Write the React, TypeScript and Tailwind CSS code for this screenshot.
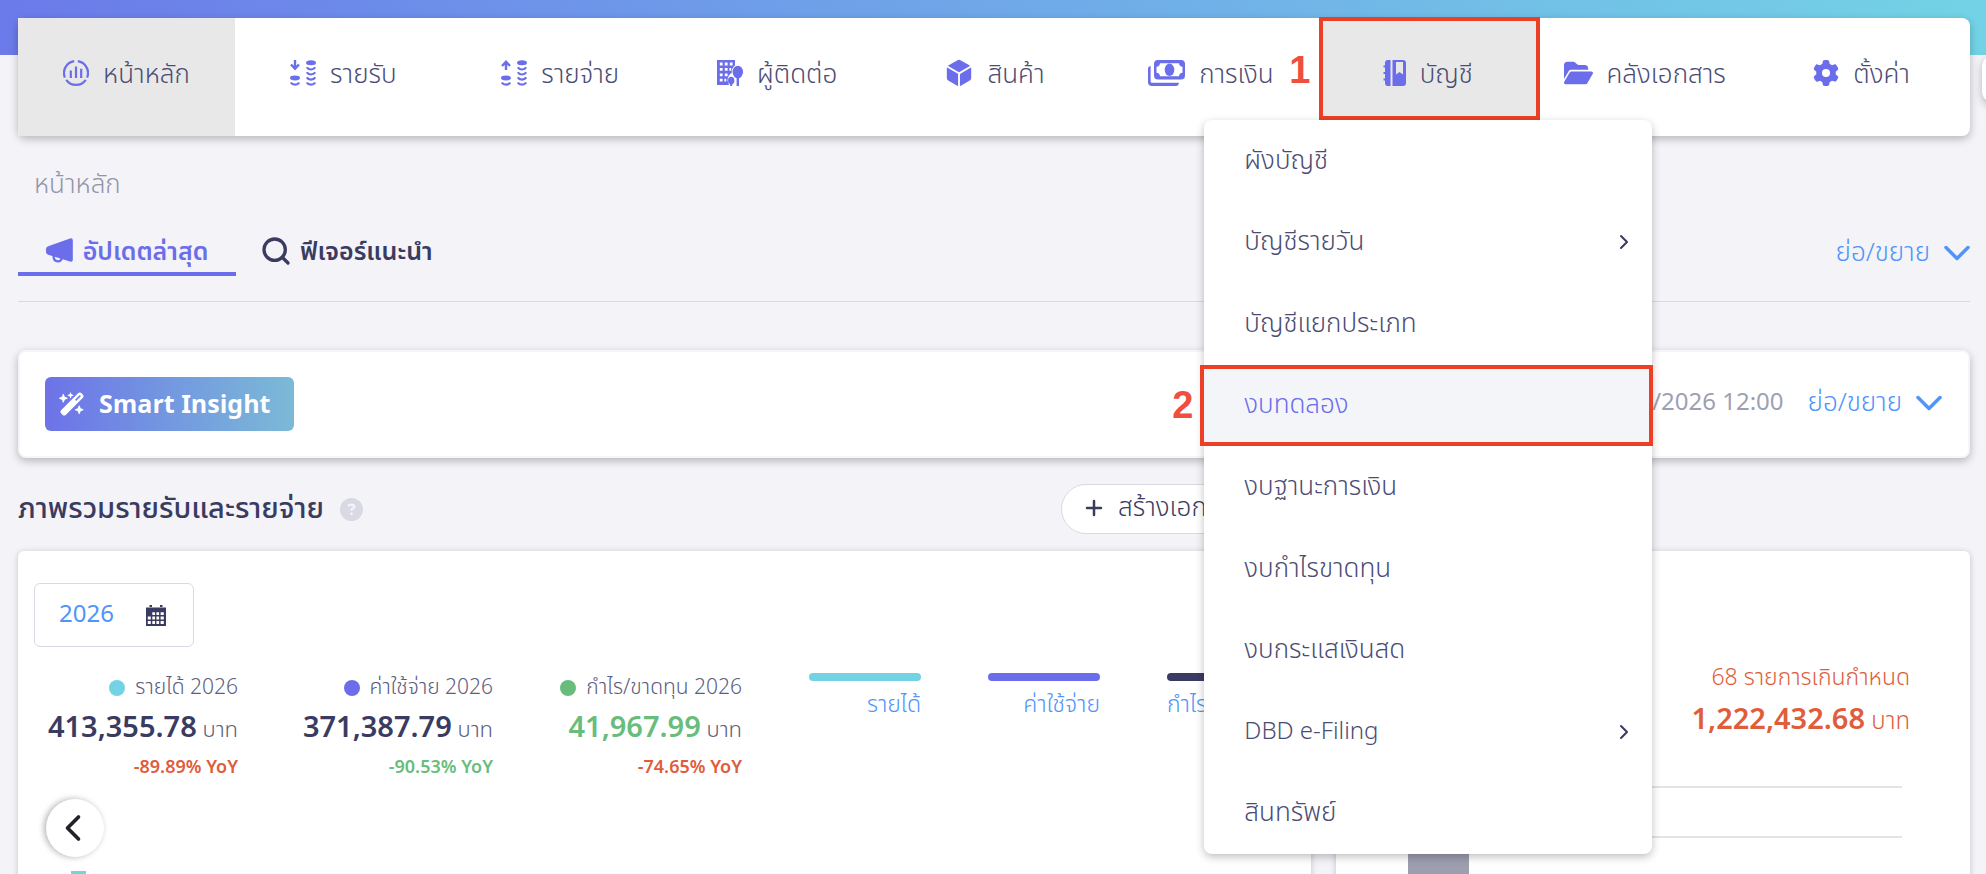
import type { ReactNode } from 'react'
import { ChevronLeft, ChevronRight, Plus, Search } from 'lucide-react'
import { FaCircleQuestion, FaFolderOpen, FaGear, FaWandMagicSparkles } from 'react-icons/fa6'
import { IoCube } from 'react-icons/io5'
import clsx from 'clsx'

const DashboardIcon = () => (
    <svg viewBox="0 0 26 26" className="h-[26px] w-[26px]" fill="none" stroke="currentColor" strokeWidth="2.2">
        <path d="M11.2 1.2A12 12 0 0 0 1.9 17.6" />
        <path d="M14.8 1.2A12 12 0 0 1 24.1 17.6" />
        <path d="M3.2 19.8A12 12 0 0 0 22.8 19.8" />
        <path d="M7.8 10.5V18M13 6.5V18M18.2 8.8V18" />
    </svg>
)

const CoinsIcon = ({ up }: { up?: boolean }) => (
    <svg viewBox="0 0 26 26" className="h-[26px] w-[26px]" fill="none" stroke="currentColor" strokeWidth="2.2">
        {up ? <path d="M5 10V2M1 6L5 1.8L9 6" strokeWidth="2.4" /> : <path d="M5 0V8.5M1 4.5L5 8.7L9 4.5" strokeWidth="2.4" />}
        <ellipse cx="5" cy="18" rx="5" ry="2.4" fill="currentColor" stroke="none" />
        <path d="M0.8 22.5C2.5 25.4 7.5 25.4 9.2 22.5" />
        <ellipse cx="21" cy="2.8" rx="5" ry="2.5" fill="currentColor" stroke="none" />
        <path d="M16.8 7.3C18.5 10.2 23.5 10.2 25.2 7.3" />
        <path d="M16.8 12.3C18.5 15.2 23.5 15.2 25.2 12.3" />
        <path d="M16.8 17.4C18.5 20.3 23.5 20.3 25.2 17.4" />
        <path d="M16.8 22.5C18.5 25.4 23.5 25.4 25.2 22.5" />
    </svg>
)

const ContactIcon = () => (
    <svg viewBox="0 0 26 26" className="h-[26px] w-[26px]" fill="currentColor">
        <path d="M0 0H18V5.5C15.5 7 14.3 10 14.8 13C12.5 14 10.5 17 10.5 20.5L12 25H0Z" />
        <path
            fill="#fff"
            d="M2.8 2.6h2.8v2.8H2.8zM7.8 2.6h2.8v2.8H7.8zM12.8 2.6h2.8v2.8h-2.8zM2.8 8h2.8v2.8H2.8zM7.8 8h2.8v2.8H7.8zM12.4 8h1.8v2.8h-1.8zM2.8 13.4h2.8v2.8H2.8zM7.8 13.4h2.8v2.8H7.8zM2.8 18.8h2.8v2.8H2.8zM7.4 18.8h1.8v2.8H7.4z"
        />
        <ellipse cx="20.8" cy="12" rx="5.2" ry="6.3" />
        <path d="M19.6 17h2.4v9h-2.4z" />
        <ellipse cx="14.2" cy="20.6" rx="3.2" ry="3.8" />
        <path d="M13.2 23h2v3h-2z" />
    </svg>
)

const CashIcon = () => (
    <svg viewBox="0 0 37 26" className="h-[26px] w-[37px]" fill="currentColor">
        <path fillRule="evenodd" d="M10 0H33Q37 0 37 4V15.5Q37 19.5 33 19.5H10Q6 19.5 6 15.5V4Q6 0 10 0ZM12 3.2A4 4 0 0 1 8.5 6.7V12.8A4 4 0 0 1 12 16.3H31A4 4 0 0 1 34.5 12.8V6.7A4 4 0 0 1 31 3.2Z" />
        <ellipse cx="21.5" cy="9.8" rx="4.8" ry="6.2" />
        <path d="M0 8.5Q0 6.2 2.6 6V21.5Q2.6 22.8 4 22.8H31Q30.4 26 28 26H4Q0 26 0 22Z" />
    </svg>
)

const LedgerIcon = () => (
    <svg viewBox="0 0 23 26" className="h-[26px] w-[23px]" fill="currentColor">
        <path d="M5 0H7.5V26H5Q2 26 2 23V20.5H0.5V18.5H2V14H0.5V12H2V7.5H0.5V5.5H2V3Q2 0 5 0Z" />
        <path fillRule="evenodd" d="M9.5 0H20Q23 0 23 3V23Q23 26 20 26H9.5ZM13 2V14.5L16.5 12L20 14.5V2Z" />
    </svg>
)

const MegaphoneIcon = () => (
    <svg viewBox="0 0 27 25" className="h-[25px] w-[27px]" fill="currentColor">
        <path d="M2.2 8.2L24 0.5Q26.8 -0.3 26.8 2.3V21.8Q26.8 24.3 24 23.5L2.2 16.8Q0 16 0 14V11Q0 9 2.2 8.2Z" />
        <path d="M7.8 17.5C6.8 21.5 9.5 23.2 11.8 23.4C14 23.5 15.3 22.2 16 20" fill="none" stroke="currentColor" strokeWidth="2.4" />
    </svg>
)

const CalendarIcon = () => (
    <svg viewBox="0 0 20 21" className="h-[21px] w-5" fill="currentColor">
        <path d="M0 2.5H20V21H0Z" />
        <path d="M3.5 0H6V2H3.5ZM14 0H16.5V2H14Z" />
        <path
            fill="#fff"
            d="M6.3 7.2h2.7v2.8H6.3zM10.4 7.2h2.7v2.8h-2.7zM14.6 7.2h3.2v2.8h-3.2zM1.800 11.400h3v3H1.800zM6.300 11.400h2.700v3H6.300zM10.400 11.400h2.700v3h-2.700zM14.600 11.400h3.200v3h-3.200zM1.800 16h3v3H1.800zM6.300 16h2.700v3H6.300zM10.400 16h2.700v3h-2.700zM14.600 16h3.200v3h-3.200z"
        />
    </svg>
)

const navItems: { label: string; icon: ReactNode; active?: boolean }[] = [
    { label: 'หน้าหลัก', icon: <DashboardIcon />, active: true },
    { label: 'รายรับ', icon: <CoinsIcon /> },
    { label: 'รายจ่าย', icon: <CoinsIcon up /> },
    { label: 'ผู้ติดต่อ', icon: <ContactIcon /> },
    { label: 'สินค้า', icon: <IoCube className="h-[30px] w-[30px]" /> },
    { label: 'การเงิน', icon: <CashIcon /> },
    { label: 'บัญชี', icon: <LedgerIcon />, active: true },
    { label: 'คลังเอกสาร', icon: <FaFolderOpen className="h-[26px] w-[29px]" /> },
    { label: 'ตั้งค่า', icon: <FaGear className="h-[26px] w-[26px]" /> },
]

const menuItems = [
    { label: 'ผังบัญชี' },
    { label: 'บัญชีรายวัน', more: true },
    { label: 'บัญชีแยกประเภท' },
    { label: 'งบทดลอง', current: true },
    { label: 'งบฐานะการเงิน' },
    { label: 'งบกำไรขาดทุน' },
    { label: 'งบกระแสเงินสด' },
    { label: 'DBD e-Filing', more: true, latin: true },
    { label: 'สินทรัพย์' },
]

const stats = [
    { label: 'รายได้ 2026', amount: '413,355.78', yoy: '-89.89% YoY', width: 'w-[204px]', dot: 'bg-[#73d3e5]', amountColor: 'text-[#3a3b61]', yoyColor: 'text-[#e05d3b]' },
    { label: 'ค่าใช้จ่าย 2026', amount: '371,387.79', yoy: '-90.53% YoY', width: 'w-[255px]', dot: 'bg-[#6b6dea]', amountColor: 'text-[#3a3b61]', yoyColor: 'text-[#69bd7c]' },
    { label: 'กำไร/ขาดทุน 2026', amount: '41,967.99', yoy: '-74.65% YoY', width: 'w-[249px]', dot: 'bg-[#69bd7c]', amountColor: 'text-[#69bd7c]', yoyColor: 'text-[#e05d3b]' },
]

const legend = [
    { label: 'รายได้', color: 'bg-[#73d3e5]' },
    { label: 'ค่าใช้จ่าย', color: 'bg-[#6b6dea]' },
    { label: 'กำไร/ขาดทุน', color: 'bg-[#3a3b61]' },
]

const AccountingMenu = () => (
    <div className="absolute top-[102px] -left-[115px] z-20 grid h-[734px] w-[448px] auto-rows-fr rounded-lg bg-white shadow-[0_3px_8px_rgba(0,0,0,0.25)]">
        {menuItems.map(({ label, more, current, latin }) => (
            <a
                key={label}
                href="#"
                className={clsx(
                    'relative flex items-center justify-between pr-4 pl-10',
                    current ? 'bg-[#f4f5f8] text-[#6b6dea]' : 'text-[#4b4c74]',
                    latin && 'text-2xl'
                )}
            >
                {label}
                {more && <ChevronRight className="h-6 w-6 text-[#3a3b61]" />}
                {current && (
                    <>
                        <span className="absolute inset-y-0 -right-px -left-1 border-4 border-[#eb4025]" />
                        <Marker className="-left-8 top-5">2</Marker>
                    </>
                )}
            </a>
        ))}
    </div>
)

const Marker = ({ className, children }: { className: string; children: ReactNode }) => (
    <span className={clsx("absolute font-['Liberation_Sans',Arial,sans-serif] text-[38px] leading-10 font-bold text-[#ef4f3c]", className)}>
        {children}
    </span>
)

const NavBar = () => (
    <nav className="relative z-10 mr-4 ml-[18px] flex-1">
        <ul className="grid h-[118px] grid-cols-9 rounded-lg bg-white shadow-[0_3px_8px_rgba(0,0,0,0.25)]">
            {navItems.map(({ label, icon, active }) => (
                <li key={label} className="relative">
                    <a
                        href="#"
                        className={clsx('flex h-full items-center justify-center gap-3.5 pb-2 text-[#4b4c74]', active && 'bg-[#e8e8e8]')}
                    >
                        <span className="text-[#6b6dea]">{icon}</span>
                        <span className="pt-1">{label}</span>
                    </a>
                    {label === 'บัญชี' && (
                        <>
                            <span className="absolute -top-px -right-1 left-0 h-[103px] border-4 border-[#eb4025]" />
                            <Marker className="-left-[30px] top-8">1</Marker>
                            <AccountingMenu />
                        </>
                    )}
                </li>
            ))}
        </ul>
    </nav>
)

const CollapseButton = () => (
    <button className="flex items-center gap-3.5 text-[#4f95f9]">
        ย่อ/ขยาย
        <svg viewBox="0 0 26 16" className="h-4 w-[26px]" fill="none" stroke="currentColor" strokeWidth="3.5" strokeLinecap="round" strokeLinejoin="round">
            <path d="M2 2.5L13 13.5L24 2.5" />
        </svg>
    </button>
)

const IncomePanel = () => (
    <section className="relative h-[400px] w-[1293px] shrink rounded-md bg-white pt-8 pl-4 shadow-[0_1px_6px_rgba(0,0,0,0.2)]">
        <button className="flex h-16 w-40 items-center gap-8 rounded-md border border-[#d9d9e4] pl-6 text-2xl font-normal text-[#4f95f9]">
            2026
            <span className="text-[#3a3b61]">
                <CalendarIcon />
            </span>
        </button>
        <div className="mt-[25px] flex">
            <div className="flex">
                {stats.map(({ label, amount, yoy, width, dot, amountColor, yoyColor }) => (
                    <div key={label} className={clsx('flex flex-col items-end whitespace-nowrap', width)}>
                        <p className="flex items-center gap-2.5 text-[21px] leading-8 text-[#5c5d7c]">
                            <span className={clsx('h-4 w-4 rounded-full', dot)} />
                            {label}
                        </p>
                        <p className="pt-1 text-[22px] leading-10 text-[#5c5d7c]">
                            <b className={clsx('text-[29px] font-semibold', amountColor)}>{amount}</b> บาท
                        </p>
                        <p className={clsx('text-lg leading-[34px] font-semibold', yoyColor)}>{yoy}</p>
                    </div>
                ))}
            </div>
            <ul className="ml-[67px] flex gap-[67px]">
                {legend.map(({ label, color }) => (
                    <li key={label} className="w-28 text-right text-[23px] leading-[48px] whitespace-nowrap text-[#4f95f9]">
                        <div className={clsx('mt-px h-2 rounded-full', color)} />
                        {label}
                    </li>
                ))}
            </ul>
        </div>
        <button
            aria-label="ก่อนหน้า"
            className="mt-3.5 ml-3 flex h-[58px] w-[58px] items-center justify-center rounded-full bg-white text-[#222329] shadow-[-2px_0_6px_rgba(0,0,0,0.3)]"
        >
            <ChevronLeft className="-ml-1 h-11 w-11" strokeWidth={2} />
        </button>
        <div className="mt-3.5 ml-[37px] h-10 w-[15px] bg-[#73d3e5]" />
    </section>
)

const OverduePanel = () => (
    <section className="h-[400px] flex-1 rounded-md bg-white pt-[107px] shadow-[0_1px_6px_rgba(0,0,0,0.2)]">
        <div className="pr-[60px] text-right text-[#e05d3b]">
            <p className="text-[23px] leading-10">68 รายการเกินกำหนด</p>
            <p className="text-2xl leading-[44px]">
                <b className="text-[29px] font-semibold">1,222,432.68</b> บาท
            </p>
        </div>
        <div className="mt-[42px] mr-[68px] ml-[72px]">
            <div className="h-[50px] border-t-2 border-[#e4e4e4]" />
            <div className="h-20 border-t-2 border-[#e4e4e4]">
                <div className="mt-3 h-20 w-[61px] bg-[#9e9eb1]" />
            </div>
        </div>
    </section>
)

export default function App() {
    return (
        <div className="h-screen overflow-hidden bg-[#f3f3f8] font-['Noto_Sans_Thai','Noto_Sans',sans-serif] text-[26px] leading-9 font-light">
            <header className="relative h-[136px]">
                <div className="h-[55px] bg-linear-to-r from-[#6b7ae9] to-[#73d3e5]" />
                <div className="absolute inset-x-0 top-[18px] flex">
                    <NavBar />
                </div>
                <button aria-label="เพิ่มเติม" className="absolute top-[55px] -right-11 h-12 w-12 rounded-xl bg-white shadow-[0_3px_8px_rgba(0,0,0,0.25)]" />
            </header>

            <main className="pr-4 pl-[18px]">
                <p className="mt-[31px] pl-4 text-[#9494aa]">หน้าหลัก</p>

                <div className="mt-[26px] flex items-center justify-between border-b border-[#d9d9e2] pb-[25px]">
                    <div className="flex text-[25px] font-semibold">
                        <button className="flex h-[47px] w-[218px] items-center justify-center gap-2.5 border-b-4 border-[#6b6dea] text-[#6b6dea]">
                            <MegaphoneIcon />
                            <span className="pt-0.5">อัปเดตล่าสุด</span>
                        </button>
                        <button className="flex h-[47px] items-center gap-2 pb-1 pl-6 text-[#3a3b61]">
                            <Search className="h-8 w-8" strokeWidth={2.5} />
                            <span className="pt-0.5">ฟีเจอร์แนะนำ</span>
                        </button>
                    </div>
                    <CollapseButton />
                </div>

                <section className="mt-12 flex h-[108px] items-center justify-between rounded-lg border-2 border-[#f6f6fa] bg-white pr-[26px] pl-[25px] shadow-[0_3px_8px_rgba(0,0,0,0.25)]">
                    <button className="flex h-[54px] w-[249px] items-center gap-3.5 rounded-md bg-linear-to-r from-[#6d72e8] to-[#7bbad6] pl-3.5 text-[25px] font-bold text-white">
                        <FaWandMagicSparkles className="h-[26px] w-[26px]" />
                        <span className="pt-0.5">Smart Insight</span>
                    </button>
                    <div className="flex items-center gap-6 pb-0.5">
                        <span className="text-2xl font-normal text-[#9f9fb2]">/2026 12:00</span>
                        <CollapseButton />
                    </div>
                </section>

                <div className="mt-[26px] flex h-[50px] items-center">
                    <h1 className="flex flex-1 items-center gap-4 text-[29px] font-medium text-[#3a3b61]">
                        ภาพรวมรายรับและรายจ่าย
                        <FaCircleQuestion className="h-[23px] w-[23px] text-[#d9d9e4]" />
                    </h1>
                    <button className="mr-[659px] flex h-full w-[250px] items-center gap-3 rounded-full border border-[#d9d9e4] bg-white pb-0.5 pl-5 text-[#3a3b61]">
                        <Plus className="h-6 w-6" strokeWidth={2.5} />
                        สร้างเอกสาร
                    </button>
                </div>

                <div className="mt-[17px] flex gap-[25px]">
                    <IncomePanel />
                    <OverduePanel />
                </div>
            </main>
        </div>
    )
}
